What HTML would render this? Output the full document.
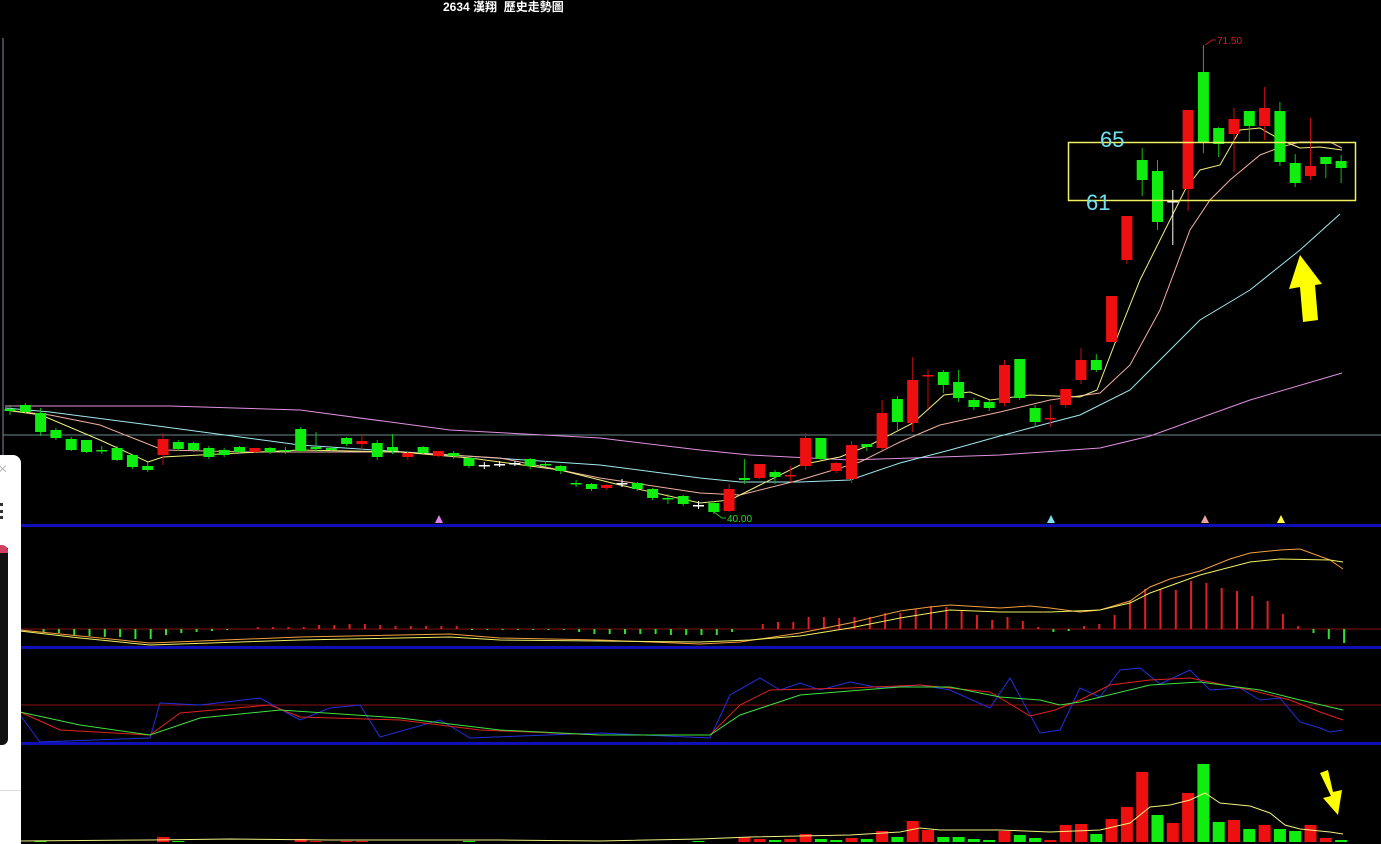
<!DOCTYPE html>
<html><head><meta charset="utf-8"><style>
html,body{margin:0;padding:0;background:#000;width:1381px;height:844px;overflow:hidden}
#t{position:absolute;left:443px;top:0px;color:#fff;font:bold 12px "Liberation Sans","Noto Sans CJK TC",sans-serif;white-space:pre;line-height:14px}
svg{position:absolute;left:0;top:0}
#pop{position:absolute;left:0;top:455px;width:21px;height:389px;background:#fff;border-radius:0 8px 0 0}
</style></head><body>
<svg id="s" width="1381" height="844" xmlns="http://www.w3.org/2000/svg">
<line x1="3" y1="38" x2="3" y2="455" stroke="#889"/>
<line x1="3" y1="435" x2="1381" y2="435" stroke="#6a8a8a"/>
<rect x="0" y="524" width="1381" height="3" fill="#1010b8"/>
<rect x="0" y="646" width="1381" height="3" fill="#1010b8"/>
<rect x="0" y="742" width="1381" height="3" fill="#1010b8"/>
<line x1="20" y1="629" x2="1381" y2="629" stroke="#8a1010"/>
<line x1="20" y1="705" x2="1381" y2="705" stroke="#8a1010"/>
<g id="g"></g>
<rect x="1068.5" y="142.5" width="287" height="58" fill="none" stroke="#f0f060" stroke-width="1.5"/>
<text x="1100" y="147" fill="#70e0f0" font-family="Liberation Sans" font-size="22">65</text>
<text x="1086" y="210" fill="#70e0f0" font-family="Liberation Sans" font-size="22">61</text>
<polyline points="1205,45 1212,40 1216,40" fill="none" stroke="#c02020"/>
<text x="1217" y="44" fill="#d02020" font-family="Liberation Sans" font-size="10">71.50</text>
<polyline points="714,512 722,518 726,518" fill="none" stroke="#20c020"/>
<text x="727" y="522" fill="#20e020" font-family="Liberation Sans" font-size="10">40.00</text>
<polygon points="1300,255 1322,284 1315,285 1318,320 1303,322 1300,287 1289,289" fill="#ffff00"/>
<polygon points="1320,773 1328,770 1333,792 1342,790 1338,815 1323,798 1331,796" fill="#ffff00"/>
<polygon points="439,515 443,523 435,523" fill="#e080f0"/>
<polygon points="1051,515 1055,523 1047,523" fill="#80e0f0"/>
<polygon points="1205,515 1209,523 1201,523" fill="#f0a0a0"/>
<polygon points="1281,515 1285,523 1277,523" fill="#ffff40"/>
</svg>
<div id="pop"><div style="position:absolute;left:0;top:6px;color:#bbb;font:16px 'Liberation Sans';left:-2px">×</div>
<div style="position:absolute;left:0;top:48px;width:5px;height:16px;border-left:3px dotted #333"></div>
<div style="position:absolute;left:0;top:93px;width:8px;height:197px;background:#111;border-radius:0 0 6px 0"></div>
<div style="position:absolute;left:0;top:90px;width:8px;height:8px;background:#d04060;border-radius:0 6px 0 0"></div>
<div style="position:absolute;left:0;top:335px;width:21px;height:1px;background:#ddd"></div>
</div>
<div id="t">2634 漢翔  歷史走勢圖</div>
<script>
var G=document.getElementById('g'),h='';
var X=function(i){return 10+15.3*i};
// [top,bot,wickTop,wickBot,color] color g/r/w
var C=[[409,411,405,415,'g'],[405,412,403,413,'g'],[413,432,408,436,'g'],[430,438,428,440,'g'],[439,450,437,451,'g'],[440,452,440,453,'g'],[450,451,446,454,'g'],[448,460,446,461,'g'],[455,467,454,469,'g'],[466,470,462,472,'g'],
[439,455,433,465,'r'],[442,449,440,451,'g'],[443,450,442,452,'g'],[448,457,446,459,'g'],[450,455,448,457,'g'],[447,452,446,454,'g'],[448,452,448,453,'r'],[448,452,447,454,'g'],[450,451,447,454,'g'],[429,451,427,452,'g'],
[447,449,432,452,'g'],[448,450,446,452,'g'],[438,444,437,446,'g'],[441,444,434,450,'r'],[443,457,440,460,'g'],[447,451,434,454,'g'],[453,457,452,460,'r'],[447,453,446,454,'g'],[451,456,451,457,'r'],[453,456,451,459,'g'],
[458,466,457,468,'g'],[465,466,462,469,'w'],[464,465,461,467,'w'],[463,464,461,466,'w'],[459,466,458,469,'g'],[464,465,461,467,'g'],[466,471,465,474,'g'],[483,484,480,487,'g'],[484,489,483,491,'g'],[485,488,484,490,'r'],
[483,484,479,487,'w'],[483,489,482,491,'g'],[489,498,488,500,'g'],[498,499,494,504,'g'],[496,504,495,506,'g'],[505,506,501,509,'w'],[503,512,501,514,'g'],[489,511,484,512,'r'],[478,480,459,484,'g'],[464,478,464,479,'r'],
[472,477,470,484,'g'],[475,476,466,482,'r'],[438,466,433,470,'r'],[438,459,438,460,'g'],[463,471,462,473,'r'],[445,479,441,483,'r'],[444,447,444,451,'g'],[413,448,400,450,'r'],[399,422,396,430,'g'],[380,423,357,432,'r'],
[375,376,369,409,'r'],[372,385,370,393,'g'],[382,398,370,402,'g'],[400,407,398,410,'g'],[402,408,400,411,'g'],[365,403,360,406,'r'],[359,398,359,400,'g'],[408,422,405,427,'g'],[418,419,405,427,'r'],[389,405,389,408,'r'],
[360,380,348,384,'r'],[360,370,354,372,'g'],[296,342,296,342,'r'],[216,260,216,264,'r'],[160,180,148,196,'g'],[171,222,160,230,'g'],[201,202,190,245,'w'],[110,189,110,211,'r'],[72,142,45,153,'g'],[128,144,127,157,'g'],
[119,134,108,172,'r'],[111,126,111,142,'g'],[108,126,87,140,'r'],[111,162,102,166,'g'],[163,183,154,187,'g'],[166,176,118,180,'r'],[157,164,157,178,'g'],[161,168,155,183,'g']];
var col={g:'#10ee10',r:'#ee1010',w:'#ffffff'},wc={g:'#10c010',r:'#c01010',w:'#ffffff'};
function pl(p,c,w){h+='<polyline points="'+p+'" fill="none" stroke="'+c+'" stroke-width="'+(w||1)+'"/>';}
pl('5,406 170,406 300,410 450,430 600,438 700,450 750,455 850,460 1000,455 1100,448 1150,436 1250,400 1342,373','#e090e0');
pl('5,408 50,412 150,425 300,445 450,455 600,465 700,478 740,482 800,482 850,480 900,463 950,450 1000,436 1030,428 1080,415 1130,390 1170,350 1200,320 1250,290 1300,250 1340,214','#a0e8f0');
pl('5,410 50,415 100,425 163,450 250,452 400,452 500,458 600,478 700,493 740,495 800,480 860,462 900,442 940,425 1000,412 1050,400 1100,393 1130,365 1160,310 1190,230 1210,200 1230,180 1260,155 1281,147 1300,142 1330,142 1342,148','#f0b0a0');
pl('5,410 41,415 100,440 148,462 163,457 200,455 300,450 400,452 470,458 560,470 620,485 700,503 730,500 760,485 800,465 840,457 870,445 913,423 944,395 970,392 990,400 1030,395 1080,397 1097,390 1120,330 1140,280 1165,230 1185,190 1200,170 1220,165 1240,130 1260,128 1281,140 1300,148 1320,147 1342,150','#f0f080');
C.forEach(function(c,i){var x=X(i);
h+='<line x1="'+x+'" y1="'+c[2]+'" x2="'+x+'" y2="'+c[3]+'" stroke="'+wc[c[4]]+'"/>';
var t=c[0],b=c[1];if(b-t<2){h+='<rect x="'+(x-5.5)+'" y="'+t+'" width="11" height="1.5" fill="'+col[c[4]]+'"/>';}
else h+='<rect x="'+(x-5.5)+'" y="'+t+'" width="11" height="'+(b-t)+'" fill="'+col[c[4]]+'"/>';});
// MACD
var M=[0,0,-3,-4,-6,-7,-8,-8,-10,-10,-6,-4,-3,-2,-1,0,2,2,2,2,4,4,5,5,4,3,3,3,3,3,-1,-1,-1,-1,-1,-1,-1,-3,-5,-5,-5,-5,-5,-6,-6,-6,-6,-3,0,
5,7,7,12,12,11,12,12,16,16,20,23,22,18,14,9,12,8,2,-3,-2,3,5,14,28,40,40,39,48,46,41,38,33,28,15,3,-4,-10,-14];
M.forEach(function(v,i){if(!v)return;var x=X(i)+3;
if(v>0)h+='<rect x="'+(x-1)+'" y="'+(629-v)+'" width="2" height="'+v+'" fill="#e02020"/>';
else h+='<rect x="'+(x-1)+'" y="629" width="2" height="'+(-v)+'" fill="#30e030"/>';});
pl('20,630 80,636 150,643 300,637 450,634 500,638 600,640 700,644 740,642 800,633 850,623 900,611 930,607 950,605 1000,608 1030,606 1050,608 1080,612 1100,610 1130,601 1150,587 1170,579 1200,571 1230,559 1250,553 1280,550 1300,549 1330,560 1343,569','#f0a040');
pl('20,631 80,638 150,645 300,640 450,637 500,640 600,641 700,642 750,640 800,636 850,628 900,618 950,610 1000,612 1050,612 1100,610 1130,603 1150,593 1200,575 1250,562 1280,559 1330,560 1343,562','#f0f060');
// KD
pl('20,715 40,742 150,738 160,703 200,705 260,698 300,720 330,708 360,705 380,737 440,720 470,738 600,733 710,738 730,695 760,678 780,690 800,683 820,690 850,682 880,688 920,685 950,690 990,708 1010,678 1040,733 1060,730 1080,688 1100,697 1120,670 1140,668 1160,684 1190,670 1210,690 1240,688 1260,700 1280,698 1300,722 1320,728 1330,732 1343,730','#2030e0');
pl('20,712 60,730 150,735 180,713 270,705 300,717 400,720 480,730 600,735 710,735 740,705 770,690 850,688 920,685 990,692 1030,716 1055,710 1080,700 1110,685 1150,680 1190,678 1250,690 1290,700 1320,712 1343,720','#e02020');
pl('20,712 80,725 150,735 200,718 280,710 400,718 500,730 600,735 710,735 740,715 800,695 900,687 950,687 1000,697 1040,700 1060,705 1080,702 1150,685 1200,682 1260,690 1300,700 1343,710','#40e040');
// Volume
var V={2:[1,'g'],10:[5,'r'],11:[1,'g'],19:[3,'r'],20:[1,'r'],22:[1,'r'],23:[1,'r'],30:[1,'g'],45:[1,'g']};
var VR=[[5,'r'],[3,'r'],[2,'g'],[3,'r'],[8,'r'],[3,'g'],[2,'g'],[4,'r'],[3,'g'],[11,'r'],[5,'g'],[21,'r'],[12,'r'],[5,'g'],[5,'g'],[3,'g'],[2,'g'],[11,'r'],[7,'g'],[4,'g'],[2,'r'],[17,'r'],[18,'r'],[8,'g'],[23,'r'],[35,'r'],[70,'r'],[27,'g'],[19,'r'],[49,'r'],[78,'g'],[20,'g'],[22,'r'],[13,'g'],[17,'r'],[13,'g'],[11,'g'],[17,'r'],[4,'r'],[2,'g']];
VR.forEach(function(v,k){V[48+k]=v;});
for(var i in V){var v=V[i],x=X(+i);h+='<rect x="'+(x-6)+'" y="'+(842-v[0])+'" width="12" height="'+v[0]+'" fill="'+col[v[1]]+'"/>';}
pl('20,841 150,840 230,839 330,840 500,840 600,841 700,839 750,837 850,835 900,832 920,828 940,830 1000,830 1050,832 1100,830 1130,823 1150,807 1170,805 1190,800 1205,793 1220,803 1250,806 1270,813 1285,825 1300,829 1330,832 1343,834','#f0f080');
G.innerHTML=h;
</script>
</body></html>
